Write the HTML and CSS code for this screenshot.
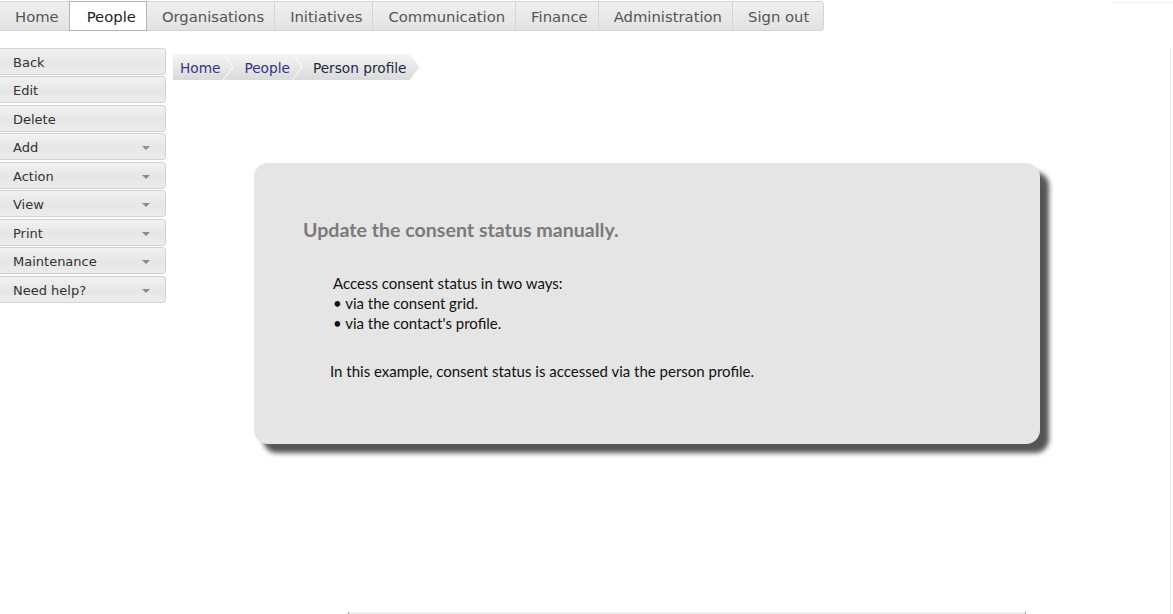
FILE: index.html
```html
<!DOCTYPE html>
<html>
<head>
<meta charset="utf-8">
<link rel="stylesheet" href="styles.css">
</head>
<body>
<div class="page">
  <nav class="topnav">
    <a class="tab">Home</a>
    <a class="tab active">People</a>
    <a class="tab">Organisations</a>
    <a class="tab">Initiatives</a>
    <a class="tab">Communication</a>
    <a class="tab">Finance</a>
    <a class="tab">Administration</a>
    <a class="tab last">Sign out</a>
  </nav>
  <div class="main">
    <aside class="sidebar">
      <div class="btn">Back</div>
      <div class="btn">Edit</div>
      <div class="btn">Delete</div>
      <div class="btn drop">Add<span class="caret"></span></div>
      <div class="btn drop">Action<span class="caret"></span></div>
      <div class="btn drop">View<span class="caret"></span></div>
      <div class="btn drop">Print<span class="caret"></span></div>
      <div class="btn drop">Maintenance<span class="caret"></span></div>
      <div class="btn drop">Need help?<span class="caret"></span></div>
    </aside>
    <section class="content">
      <div class="crumbs">
        <span class="crumb first">Home</span>
        <span class="crumb">People</span>
        <span class="crumb current">Person profile</span>
      </div>
      <div class="card">
        <h2 class="card-title">Update the consent status manually.</h2>
        <div class="card-list">
          <p>Access consent status in two ways:</p>
          <p>&bull; via the consent grid.</p>
          <p>&bull; via the contact's profile.</p>
        </div>
        <p class="card-note">In this example, consent status is accessed via the person profile.</p>
      </div>
    </section>
  </div>
  <div class="bottom-bar"></div>
</div>
</body>
</html>
```
FILE: styles.css
```css
html, body {
  margin: 0;
  padding: 0;
  background: #fff;
}
body {
  width: 1173px;
  height: 614px;
  overflow: hidden;
  font-family: "DejaVu Sans", Verdana, sans-serif;
}
.page {
  position: relative;
  height: 614px;
  width: 1173px;
}
.page::after {
  content: "";
  position: absolute;
  right: 2px;
  top: 47px;
  bottom: 0;
  width: 1px;
  background: #e6e6e6;
}
.page::before {
  content: "";
  position: absolute;
  right: 0;
  top: 1px;
  width: 61px;
  height: 1px;
  background: #eeeeee;
}
.topnav {
  display: flex;
  margin-top: 1px;
  width: 824px;
  height: 30px;
  box-sizing: border-box;
  border: 1px solid #d4d4d4;
  border-left: none;
  border-radius: 0 4px 4px 0;
  background: linear-gradient(#f0f0f0, #e2e2e2);
}
.tab {
  display: flex;
  align-items: center;
  padding: 1px 10px 0 15px;
  font-size: 14.8px;
  color: #555;
  border-right: 1px solid #d4d4d4;
  white-space: nowrap;
}
.tab.last { border-right: none; flex: 1; }
.tab.active {
  background: #fff;
  color: #222;
  border: 1px solid #b4b4b4;
  margin: -1px 0 -1px -1px;
  padding: 1px 10px 0 17px;
}
.main {
  display: flex;
  margin-top: 17px;
}
.sidebar {
  width: 166px;
  flex: none;
  display: flex;
  flex-direction: column;
}
.btn {
  position: relative;
  height: 27px;
  margin-bottom: 1.45px;
  box-sizing: border-box;
  border: 1px solid #d2d2d2;
  border-left: none;
  border-radius: 0 4px 4px 0;
  background: linear-gradient(#f1f1f1, #e6e6e6 55%, #ececec);
  font-size: 13px;
  color: #333;
  padding-left: 13px;
  padding-top: 1px;
  line-height: 26px;
}
.caret {
  position: absolute;
  right: 15px;
  top: 12px;
  width: 0;
  height: 0;
  border-left: 4px solid transparent;
  border-right: 4px solid transparent;
  border-top: 4px solid #8a8a8a;
}
.content {
  padding-left: 7px;
  padding-top: 6px;
  display: flex;
  flex-direction: column;
  align-items: flex-start;
}
.crumbs {
  display: flex;
  height: 26px;
}
.crumb {
  display: flex;
  align-items: center;
  font-size: 13.7px;
  color: #333388;
  background: linear-gradient(#f4f4f4, #dadada);
  padding: 1px 12px 0 21px;
  margin-left: -9px;
  clip-path: polygon(0 0, calc(100% - 10px) 0, 100% 50%, calc(100% - 10px) 100%, 0 100%, 10px 50%);
}
.crumb.first {
  margin-left: 0;
  padding-left: 7px;
  clip-path: polygon(0 0, calc(100% - 10px) 0, 100% 50%, calc(100% - 10px) 100%, 0 100%);
}
.crumb.current {
  color: #1c2a48;
  padding-left: 20px;
  padding-right: 13px;
}
.card {
  margin-left: 81px;
  margin-top: 83px;
  width: 786px;
  height: 281px;
  box-sizing: border-box;
  background: #e5e5e5;
  border-radius: 14px;
  box-shadow: 9px 9px 5px #555;
  padding: 54px 0 0 49px;
  font-family: Lato, "Open Sans", sans-serif;
  color: #111;
}
.card-title {
  margin: 0;
  font-size: 19.6px;
  font-weight: 700;
  color: #7a7a7a;
  line-height: 26px;
}
.card-list {
  margin: 30px 0 0 30px;
  font-size: 15px;
  line-height: 20px;
}
.card-list p { margin: 0; }
.card-note {
  margin: 28px 0 0 27px;
  font-size: 15px;
  line-height: 20px;
}
.bottom-bar {
  position: absolute;
  left: 348px;
  top: 611px;
  width: 676px;
  height: 3px;
  background: #f0f0f0;
  border-left: 1px solid #999;
  border-right: 1px solid #999;
}
```
